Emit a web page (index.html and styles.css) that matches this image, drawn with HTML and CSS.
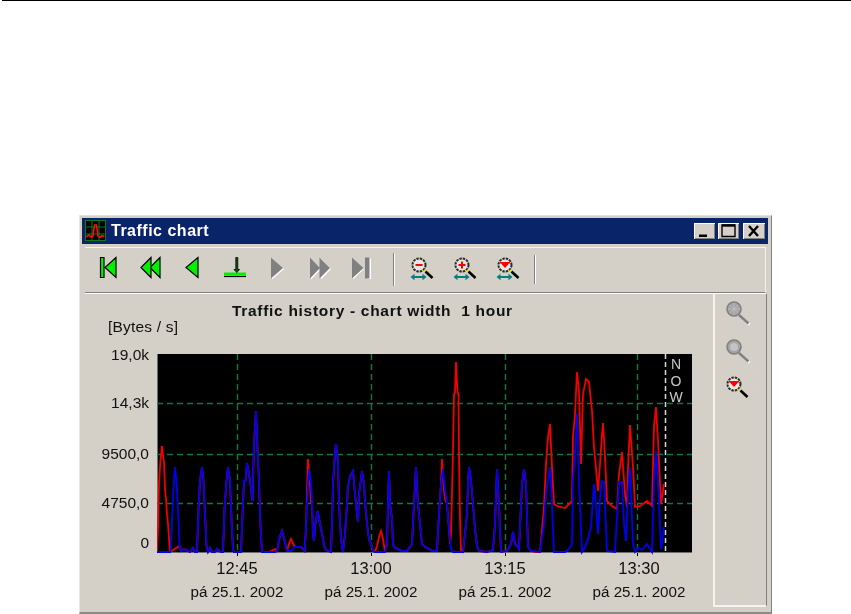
FILE: index.html
```html
<!DOCTYPE html>
<html lang="en">
<head>
<meta charset="utf-8">
<title>Traffic chart</title>
<link rel="stylesheet" href="styles.css">
</head>
<body>
<svg class="defs" width="0" height="0" aria-hidden="true">
  <defs>
    <g id="lens-ring">
      <circle cx="10" cy="10" r="6.500" fill="#e8e6e0" stroke="#2a2a2a" stroke-width="2" stroke-dasharray="2.400 1"/>
      <path d="M15 15l2 2" stroke="#e8e000" stroke-width="2.200"/>
      <path d="M16.500 16.500l7 6.500" stroke="#000" stroke-width="2.600"/>
    </g>
    <g id="width-arrow">
      <path d="M4 22h11" stroke="#008080" stroke-width="2"/>
      <path d="M1.500 22l4-3.200v6.400zM17.500 22l-4-3.200v6.400z" fill="#008080"/>
    </g>
    <g id="lens-gray">
      <path d="M16.500 17.500l9 8" stroke="#fff" stroke-width="2.400"/>
      <path d="M15 16l9.500 8.500" stroke="#808080" stroke-width="2.600"/>
      <circle cx="10" cy="10" r="7" fill="#a4a4a4" stroke="#808080" stroke-width="1.600"/>
    </g>
  </defs>
</svg>
<div class="rule"></div>
<main class="window">
  <header class="titlebar">
    <svg class="app-icon" width="21" height="21" viewBox="0 0 21 21">
      <rect x=".5" y=".5" width="20" height="20" fill="#000" stroke="#0b7a22"/>
      <path d="M.5 7h20M.5 14h20M7 .5v20M14 .5v20" stroke="#0b7a22"/>
      <path d="M1 17l3-2 2 2 2-1 1.500-11 2 0 1.500 11 2 1.500 2-2 2.500 1" fill="none" stroke="#ff1010" stroke-width="1.500"/>
    </svg>
    <span class="window-title">Traffic chart</span>
    <div class="controls">
      <div class="control"><svg width="21" height="16" viewBox="0 0 21 16"><path d="M5 11.500h8v2.500H5z" fill="#000"/></svg></div>
      <div class="control"><svg width="21" height="16" viewBox="0 0 21 16"><path d="M4 2h13v11.500H4z" fill="none" stroke="#000" stroke-width="1.400"/><path d="M4 2.500h13" stroke="#000" stroke-width="2.400"/></svg></div>
      <div class="control control-close"><svg width="22" height="16" viewBox="0 0 22 16"><path d="M6 3l9 10M15 3L6 13" stroke="#000" stroke-width="2.400"/></svg></div>
    </div>
  </header>

  <nav class="toolbar">
    <div class="tool"><svg width="24" height="24" viewBox="0 0 24 24"><g fill="#00f000" stroke="#000" stroke-width="1.200"><path d="M3.500 2.500h3.500v20H3.500z"/><path d="M19 2.500L8 12.500l11 10z"/></g></svg></div>
    <div class="tool"><svg width="24" height="24" viewBox="0 0 24 24"><g fill="#00f000" stroke="#000" stroke-width="1.200"><path d="M21 2.500L11 12.500l10 10z"/><path d="M12 2.500L2 12.500l10 10z"/></g></svg></div>
    <div class="tool"><svg width="24" height="24" viewBox="0 0 24 24"><path d="M17 2.500L5 12.500l12 10z" fill="#00f000" stroke="#000" stroke-width="1.200"/></svg></div>
    <div class="tool"><svg width="24" height="24" viewBox="0 0 24 24"><path d="M1 17.500h22v3H1z" fill="#00f000"/><path d="M1 21.500h22" stroke="#000" stroke-width="1.200"/><path d="M12.800 2.500h2v12h1.700L13.800 17.500 11 14.500h1.800z" fill="#0a5a0a" stroke="#000" stroke-width=".8"/></svg></div>
    <div class="tool"><svg width="24" height="24" viewBox="0 0 24 24"><path d="M7 3.500v21l12-10.500z" fill="#fff"/><path d="M6 2.500v21l12-10.500z" fill="#808080"/></svg></div>
    <div class="tool"><svg width="24" height="24" viewBox="0 0 24 24"><path d="M4 3.500v21l10-10.500zM14 3.500v21l10-10.500z" fill="#fff"/><path d="M3 2.500v21l10-10.500zM12.500 2.500v21l10.500-10.500z" fill="#808080"/></svg></div>
    <div class="tool"><svg width="24" height="24" viewBox="0 0 24 24"><path d="M4 3.500v21l11-10.500zM18 3.500h4v21h-4z" fill="#fff"/><path d="M3 2.500v21l11.500-10.500zM16 2.500h4.500v21H16z" fill="#808080"/></svg></div>
    <div class="separator"></div>
    <div class="tool tool-zoom"><svg width="26" height="26" viewBox="0 0 26 26"><use href="#lens-ring"/><path d="M6.500 10h7" stroke="#ff0000" stroke-width="2"/><use href="#width-arrow"/></svg></div>
    <div class="tool tool-zoom"><svg width="26" height="26" viewBox="0 0 26 26"><use href="#lens-ring"/><path d="M6.500 10h7M10 6.500v7" stroke="#ff0000" stroke-width="2"/><use href="#width-arrow"/></svg></div>
    <div class="tool tool-zoom"><svg width="26" height="26" viewBox="0 0 26 26"><use href="#lens-ring"/><path d="M5 7h10v1.500H14l-4 4.500-4-4.500H5z" fill="#ff0000"/><use href="#width-arrow"/></svg></div>
    <div class="separator separator-end"></div>
  </nav>

  <section class="content">
    <div class="chart-panel">
      <h1 class="chart-title">Traffic history - chart width&nbsp; 1 hour</h1>
      <div class="unit">[Bytes / s]</div>
      <div class="chart-body">
        <div class="y-axis">
          <span>19,0k</span>
          <span>14,3k</span>
          <span>9500,0</span>
          <span>4750,0</span>
          <span>0</span>
        </div>
        <div class="plot-column">
          <svg class="plot" width="536" height="204" viewBox="0 0 536 204">
            <rect x="0" y="0" width="535" height="198.500" fill="#000"/>
            <path d="M.5 0v198.500H535" fill="none" stroke="#6e6e6e"/>
            <path class="grid" d="M0 49.500h535M0 100.500h535M0 149.500h535M80.500 0v198M214.500 0v198M348.500 0v198M480.500 0v198"/>
            <path class="now-line" d="M508.500 0v198"/>
            <text class="now-text" x="519" y="15">N</text>
            <text class="now-text" x="519" y="31.500">O</text>
            <text class="now-text" x="519" y="48">W</text>
            <path d="M80.500 199v3M214.500 199v3M348.500 199v3M480.500 199v3" stroke="#000"/>
            <polyline class="trace trace-red" points="0,198 1,175 2,130 3.500,105 5,92 6,102 7,108 8,135 9,145 10,160 11,170 12,185 13,198 22.500,192 24,197 27,195 29,196 31,197 33,198 36,194 38,198 40,198 41.500,155 43,127 45,113 46.500,127 48,160 49.500,192 51,198 53,194 55,198 58,198 60,195 62,197 64,198 66,198 67.500,155 69.500,127 71,113 73,127 74.500,165 76,195 77,198 84,198 85.500,160 87,127 88.500,127 90,109 92,120 94,135 95.500,147 97,90 99,57 100,83 102,127 103.500,173 105,198 112,198 118,195 120,197 122.700,183 125,177 127.700,187 130,197 132,190 134,185 137.700,193 144,193 147.700,197 149,173 150.500,120 151,105 153,130 154,148 155,148 156,180 157,187 158,172 160.700,157 163,170 165,180 168,195 171,197 174,198 175,170 176,130 178,100 179,90 181,107 182,150 184,185 186,198 188,180 190,150 191,133 193,122 196,117 198,140 199,150 201,168 202,140 204,125 205,117 207,130 208,147 210,170 212,185 214,190 216,197 218,198 220,192 222,183 224,177 226,185 228,198 230,190 231,150 232,117 233,150 235,165 236,190 237,193 245,197 250,197 255,190 257,150 259,113 261,150 263,170 265,190 268,193 272,195 276,197 280,197 282,160 284,130 285,105 286,125 288,145 290,150 292,175 293,190 294,180 296,97 297,40 298,38 299,8 300.500,38 301.500,40 302,103 303,165 304,197 306,198 310,160 311,130 312,113 314,127 316,150 318,175 320,192 322,197 330,198 336,196 338,170 339,140 340,115 342,150 344,198 350,197 354,190 356,178 358,190 360,192 362,195 365,130 367,115 369,130 371,193 374,197 378,198 383,198 384,187 387,153 389,110 391,83 393,70 395,113 397,150 400,152 408,154 412,150 415,147 416,83 418,60 420,18 422,37 424,110 426,40 429,25 432,28 435,57 437,93 439,115 441,137 443,110 445,80 446,69 448,103 450,147 455,152 460,155 462,120 465,98 468,140 470,153 471,113 473,71 476,113 478,153 483,152 490,147 495,152 497,72 499,53 501,87 504,150 507,130"/>
            <polyline class="trace trace-blue" points="0,198 13,198 14,195 15.500,155 17,127 18,113 19.500,127 21,155 22.500,192 24,197 27,195 29,196 31,197 33,198 36,194 38,198 40,198 41.500,155 43,127 45,113 46.500,127 48,160 49.500,192 51,198 53,194 55,198 58,198 60,195 62,197 64,198 66,198 67.500,155 69.500,127 71,113 73,127 74.500,165 76,195 77,198 84,198 85.500,160 87,127 88.500,127 90,109 92,120 94,135 95.500,147 97,90 99,57 100,83 102,127 103.500,173 105,198 118,198 120,197 122.700,183 125,177 127.700,187 130,197 134,197 137.700,193 144,193 147.700,197 149,173 151,130 152,115 154,130 155,148 156,180 157,187 158,172 160.700,157 163,170 165,180 168,195 171,197 174,198 175,170 176,130 178,100 179,90 181,107 182,150 184,185 186,198 188,180 190,150 191,133 193,122 196,117 198,140 199,150 201,168 202,140 204,125 205,117 207,130 208,147 210,170 212,185 214,190 216,197 218,198 228,198 230,190 231,150 232,117 233,150 235,165 236,190 237,193 245,197 250,197 255,190 257,150 259,113 261,150 263,170 265,190 268,193 272,195 276,197 280,197 282,160 284,130 286,115 288,135 290,150 292,175 294,195 296,198 306,198 310,160 311,130 312,113 314,127 316,150 318,175 320,192 322,197 330,198 336,196 338,170 339,140 340,115 342,150 344,198 350,197 354,190 356,178 358,190 360,192 362,195 365,130 367,115 369,130 371,193 374,197 383,198 387,170 389,140 391,127 393,113 395,153 397,198 408,198 412,195 415,190 416,127 418,100 420,60 422,128 425,198 428,193 431,185 434,173 437,130 439,150 441,180 443,145 445,127 447,128 450,197 458,198 462,128 465,128 467,170 469,187 471,140 473,113 476,190 478,198 481,194 485,196 490,190 495,198 497,127 499,97 502,147 504,195 507,173"/>
          </svg>
          <div class="x-axis">
            <div class="tick"><span class="tick-time">12:45</span><br>pá 25.1. 2002</div>
            <div class="tick"><span class="tick-time">13:00</span><br>pá 25.1. 2002</div>
            <div class="tick"><span class="tick-time">13:15</span><br>pá 25.1. 2002</div>
            <div class="tick"><span class="tick-time">13:30</span><br>pá 25.1. 2002</div>
          </div>
        </div>
      </div>
    </div>
    <aside class="side-panel">
      <div class="side-tool"><svg width="28" height="28" viewBox="0 0 28 28"><use href="#lens-gray"/><path d="M4 10h12M10 4v12M6 6l8 8M14 6l-8 8" stroke="#c4c4c4" stroke-width=".7"/></svg></div>
      <div class="side-tool"><svg width="28" height="28" viewBox="0 0 28 28"><use href="#lens-gray"/><circle cx="10" cy="10" r="4" fill="#c4c4c4"/></svg></div>
      <div class="side-tool side-tool-active"><svg width="26" height="26" viewBox="0 0 26 26"><use href="#lens-ring"/><path d="M5 7h10v1.500H14l-4 4.500-4-4.500H5z" fill="#ff0000"/></svg></div>
    </aside>
  </section>
</main>
</body>
</html>
```

FILE: styles.css
```css
html, body {
  margin: 0;
  padding: 0;
  background: #fff;
  overflow: hidden;
}

body {
  width: 851px;
  height: 614px;
  font-family: "Liberation Sans", Arial, sans-serif;
  color: #111;
}

.defs {
  display: block;
  height: 0;
}

.rule {
  height: 1px;
  margin-left: 2px;
  background: #000;
}

.window {
  box-sizing: border-box;
  width: 693px;
  height: 399px;
  margin: 214px 0 0 79px;
  padding: 2px 3px 0 2px;
  background: #d4d0c8;
  border-top: 1px solid #e4e2dc;
  border-left: 1px solid #e8e6e0;
  border-right: 1px solid #808080;
  border-bottom: 2px solid #8a8a86;
  display: flex;
  flex-direction: column;
  filter: blur(0.4px);
}

.titlebar {
  flex: none;
  height: 26px;
  background: #0a246a;
  display: flex;
  align-items: center;
  padding: 0 3px;
  color: #fff;
}

.app-icon {
  flex: none;
  margin-bottom: 2px;
}

.window-title {
  margin-left: 5px;
  font-size: 16px;
  font-weight: 700;
  letter-spacing: .5px;
}

.controls {
  margin-left: auto;
  display: flex;
  gap: 3px;
}

.control {
  display: flex;
  width: 21px;
  height: 16px;
  background: #d4d0c8;
  box-shadow: inset 1px 1px 0 #fff, inset -1px -1px 0 #808080;
}

.control-close {
  width: 22px;
  margin-left: 1px;
}

.toolbar {
  flex: none;
  box-sizing: border-box;
  height: 46px;
  margin: 3px 2px 0 3px;
  padding: 7px 0 0 3px;
  border-top: 1px solid #f4f3f0;
  border-right: 1px solid #f4f3f0;
  border-bottom: 1px solid #808080;
  box-shadow: 0 1px 0 #fff;
  display: flex;
  align-items: flex-start;
}

.tool {
  flex: none;
  width: 42px;
  display: flex;
  justify-content: center;
}

.tool-zoom {
  width: 43px;
}

.separator {
  flex: none;
  width: 1px;
  height: 33px;
  margin: -2px 6px 0 11px;
  background: #808080;
  box-shadow: 1px 0 0 #fff;
}

.separator-end {
  height: 29px;
  margin: 0 0 0 5px;
}

.content {
  flex: 1;
  min-height: 0;
  display: flex;
  margin: 0 1px 0 3px;
}

.chart-panel {
  flex: 1;
  min-width: 0;
  padding-top: 8px;
}

.chart-title {
  margin: 0;
  padding-left: 147px;
  font-size: 15.500px;
  font-weight: 700;
  letter-spacing: .7px;
  line-height: 20px;
  white-space: pre;
}

.unit {
  margin: -3px 0 0 23px;
  font-size: 15.500px;
  letter-spacing: .2px;
  line-height: 17px;
}

.chart-body {
  display: flex;
  margin-top: 19px;
  align-items: flex-start;
}

.y-axis {
  flex: none;
  box-sizing: border-box;
  width: 64px;
  margin-top: -7px;
  display: grid;
  grid-template-rows: 48px 51px 49px 40px 16px;
  justify-items: end;
  font-size: 15.500px;
  line-height: 16px;
}

.plot-column {
  margin-left: 8px;
  flex: none;
}

.plot {
  display: block;
}

.grid {
  fill: none;
  stroke: #0a7a40;
  stroke-width: 1.400;
  stroke-dasharray: 6 4;
}

.now-line {
  fill: none;
  stroke: #d8d8d8;
  stroke-width: 1.500;
  stroke-dasharray: 5 3;
}

.now-text {
  fill: #c8c8c8;
  font-size: 14px;
  text-anchor: middle;
}

.trace {
  fill: none;
  stroke-width: 1.800;
  stroke-linejoin: miter;
}

.trace-red {
  stroke: #f00000;
}

.trace-blue {
  stroke: #0000f0;
}

.x-axis {
  display: grid;
  grid-template-columns: repeat(4, 134px);
  margin: -1px 0 0 13px;
}

.tick {
  text-align: center;
  font-size: 15.200px;
  line-height: 23px;
  white-space: nowrap;
}

.tick-time {
  font-size: 16.500px;
}

.side-panel {
  flex: none;
  box-sizing: border-box;
  width: 54px;
  height: 313px;
  margin: 1px 0 0 0;
  padding: 5px 0 0 9px;
  border-left: 2px solid #f4f3f0;
  border-right: 1px solid #808080;
  border-bottom: 2px solid #f4f3f0;
  display: flex;
  flex-direction: column;
  gap: 10px;
}

.side-tool {
  height: 28px;
}

.side-tool-active {
  margin-top: -1px;
}
```
